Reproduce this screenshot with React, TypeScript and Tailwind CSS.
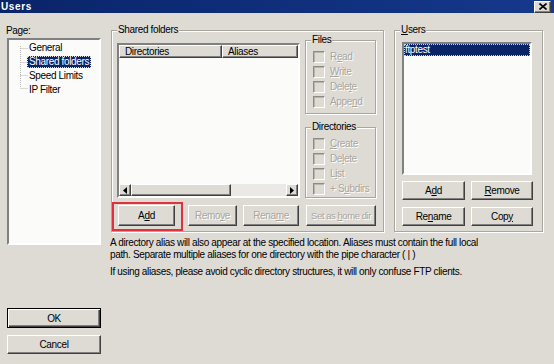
import React from 'react'

const raised =
  'border border-t-white border-l-white border-r-[#404040] border-b-[#404040] shadow-[inset_-1px_-1px_0_#808080] bg-[#dedbd5]'
const sunken =
  'border-2 border-t-[#808080] border-l-[#808080] border-r-white border-b-white'
const etched = 'border border-[#a9a69f] shadow-[inset_1px_1px_0_#fff,1px_1px_0_#fff]'
const disabledText = 'text-[#a8a59e] [text-shadow:1px_1px_0_#fff]'

const Btn = ({ children, className, disabled }: { children: React.ReactNode; className: string; disabled?: boolean }) => (
  <div className={`flex items-center justify-center leading-none ${raised} ${className} ${disabled ? disabledText : 'text-black'}`}>
    {children}
  </div>
)

const Check = ({ label }: { label: React.ReactNode }) => (
  <div className="flex items-center h-[15px]">
    <div className="shrink-0 w-[12px] h-[12px] border border-t-[#8d8a84] border-l-[#8d8a84] border-r-white border-b-white shadow-[inset_1px_1px_0_#b8b5ae]" />
    <span className={`ml-[5px] ${disabledText}`}>{label}</span>
  </div>
)

const Group = ({ label, className, children }: { label: React.ReactNode; className: string; children?: React.ReactNode }) => (
  <div className={`relative ${etched} ${className}`}>
    <span className="absolute -top-[7px] left-[5px] px-[1px] bg-[#dedbd5] leading-[12px] text-black">{label}</span>
    {children}
  </div>
)

const App: React.FC = () => {
  return (
    <div
      className="w-[554px] h-[364px] overflow-hidden bg-[#dedbd5] text-[10px] tracking-[-0.35px] whitespace-nowrap text-black flex flex-col"
      style={{ fontFamily: "'Liberation Sans', Arial, sans-serif" }}
    >
      {/* title bar */}
      <div className="h-[13px] bg-gradient-to-r from-[#0a246a] to-[#15398c] flex items-center justify-between">
        <span className="text-white font-bold text-[10px] tracking-[0.6px] leading-none pl-[1px]">Users</span>
        <div className={`w-[17px] h-[12px] mr-[3px] flex items-center justify-center ${raised}`}>
          <svg width="8" height="7" viewBox="0 0 8 7">
            <path d="M0.5 0.5 L7.5 6.5 M7.5 0.5 L0.5 6.5" stroke="#000" strokeWidth="1.6" />
          </svg>
        </div>
      </div>

      <div className="flex flex-1">
        {/* left column */}
        <div className="ml-[7px] w-[94px] flex flex-col pt-[11px]">
          <div className="h-[13px] leading-[13px] -ml-[1px]">Page:</div>
          <div className={`relative mt-[1px] h-[207px] bg-[#fbfbfa] ${sunken} pt-[1px]`}>
            <svg className="absolute left-0 top-0" width="30" height="60">
              <path d="M11.5 6 V48 M11.5 8.5 H19 M11.5 22.5 H19 M11.5 35.5 H19 M11.5 48.5 H19" stroke="#b4b4b4" strokeDasharray="1 1" />
            </svg>
            {['General', 'Shared folders', 'Speed Limits', 'IP Filter'].map((t, i) => (
              <div key={t} className="h-[14px] flex items-center pl-[18px]">
                <span
                  className={`px-[2px] leading-[12px] ${i === 1 ? 'bg-[#0a246a] text-white outline outline-1 outline-dotted outline-[#e0e0e0] -outline-offset-1' : ''}`}
                >
                  {t}
                </span>
              </div>
            ))}
          </div>
          <div className="mt-[63px] h-[20px] flex items-center justify-center border border-black shadow-[inset_1px_1px_0_#fff,inset_-1px_-1px_0_#404040,inset_-2px_-2px_0_#808080]">
            OK
          </div>
          <Btn className="mt-[7px] h-[19px]">Cancel</Btn>
        </div>

        {/* right area */}
        <div className="ml-[10px] flex flex-col">
          <div className="flex mt-[17px]">
            <Group label="Shared folders" className="w-[273px] h-[202px]">
              <div className="flex items-start">
                <div className={`ml-[5px] mt-[12px] w-[183px] h-[155px] bg-[#fbfbfa] ${sunken} flex flex-col`}>
                  <div className="flex h-[13px]">
                    <div className={`w-[103px] ${raised} flex items-center pl-[5px] leading-none`}>Directories</div>
                    <div className={`flex-1 ${raised} flex items-center pl-[5px] leading-none`}>Aliases</div>
                  </div>
                  <div className="flex-1" />
                  <div className="flex h-[12px] bg-[#ebe9e5]">
                    <div className={`w-[12px] ${raised} flex items-center justify-center`}>
                      <svg width="4" height="7" viewBox="0 0 4 7"><path d="M4 0 V7 L0 3.5 Z" fill="#000" /></svg>
                    </div>
                    <div className={`w-[100px] ${raised}`} />
                    <div className="flex-1" />
                    <div className={`w-[12px] ${raised} flex items-center justify-center`}>
                      <svg width="4" height="7" viewBox="0 0 4 7"><path d="M0 0 V7 L4 3.5 Z" fill="#000" /></svg>
                    </div>
                  </div>
                </div>
                <div className="ml-[5px] mt-[9px] flex flex-col">
                  <Group label="Files" className="w-[71px] h-[74px]">
                    <div className="ml-[7px] mt-[8px]">
                      <Check label={<>R<u>e</u>ad</>} />
                      <Check label={<><u>W</u>rite</>} />
                      <Check label={<>Dele<u>t</u>e</>} />
                      <Check label={<>Appe<u>n</u>d</>} />
                    </div>
                  </Group>
                  <Group label="Directories" className="mt-[13px] w-[71px] h-[71px]">
                    <div className="ml-[7px] mt-[8px]">
                      <Check label={<><u>C</u>reate</>} />
                      <Check label={<>De<u>l</u>ete</>} />
                      <Check label={<>L<u>i</u>st</>} />
                      <Check label={<>+ S<u>u</u>bdirs</>} />
                    </div>
                  </Group>
                </div>
              </div>
              <div className="flex mt-[7px]">
                <div className="relative ml-[6px]">
                  <Btn className="w-[57px] h-[21px]">A<u>d</u>d</Btn>
                  <div className="absolute -left-[6px] -top-[3px] w-[71px] h-[29px] border-2 border-[#e0323e]" />
                </div>
                <Btn disabled className="ml-[13px] w-[49px] h-[21px]">Remo<u>v</u>e</Btn>
                <Btn disabled className="ml-[6px] w-[56px] h-[21px]">Rena<u>m</u>e</Btn>
                <Btn disabled className="ml-[7px] w-[70px] h-[21px] text-[9.5px] tracking-[-0.45px] whitespace-pre">{'Set as '}<u>h</u>{'ome dir'}</Btn>
              </div>
            </Group>

            <Group label={<><u>U</u>sers</>} className="ml-[10px] w-[149px] h-[202px]">
              <div className={`ml-[7px] mt-[11px] w-[130px] h-[133px] bg-[#fbfbfa] ${sunken}`}>
                <div className="h-[12px] bg-[#0a246a] text-white leading-[12px] pl-[1px] outline outline-1 outline-dotted outline-[#d0d0d0] -outline-offset-1">
                  ftptest
                </div>
              </div>
              <div className="flex mt-[6px] ml-[7px]">
                <Btn className="w-[63px] h-[19px]">A<u>d</u>d</Btn>
                <Btn className="ml-[6px] w-[62px] h-[19px]"><u>R</u>emove</Btn>
              </div>
              <div className="flex mt-[7px] ml-[7px]">
                <Btn className="w-[63px] h-[19px]">Re<u>n</u>ame</Btn>
                <Btn className="ml-[6px] w-[62px] h-[19px]">Cop<u>y</u></Btn>
              </div>
            </Group>
          </div>

          <div className="mt-[5px] -ml-[1px] leading-[12px]">
            <p>A directory alias will also appear at the specified location. Aliases must contain the full local</p>
            <p>path. Separate multiple aliases for one directory with the pipe character ( | )</p>
            <p className="mt-[5px]">If using aliases, please avoid cyclic directory structures, it will only confuse FTP clients.</p>
          </div>
        </div>
      </div>
    </div>
  )
}

export default App
